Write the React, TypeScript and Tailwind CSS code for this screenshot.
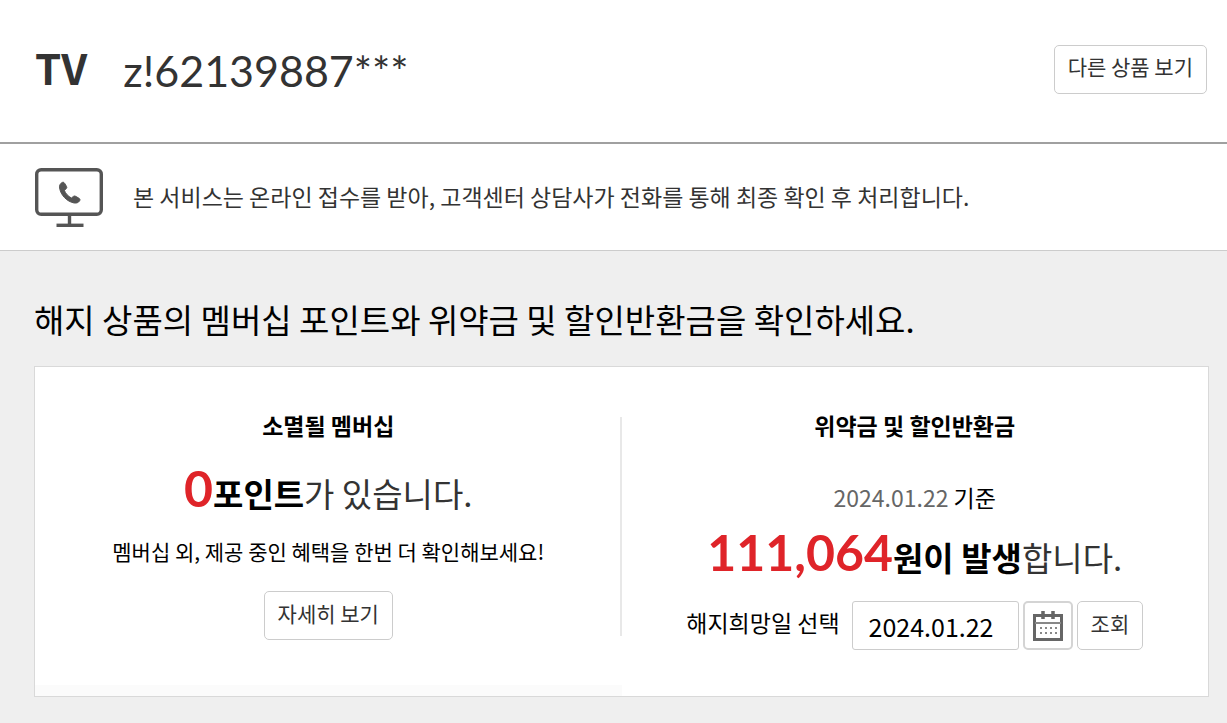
import type { ReactNode } from "react";

function MonitorIcon() {
  return (
    <svg className="h-[60px] w-[68px] shrink-0" viewBox="0 0 68 60" fill="none" aria-hidden="true">
      <rect x="1.7" y="1.7" width="64.6" height="44.6" rx="4.5" stroke="#555" strokeWidth="3.4" />
      <path d="M34.5 47v10" stroke="#555" strokeWidth="3.4" />
      <path d="M21.5 57.3h27" stroke="#555" strokeWidth="3.4" />
      <path
        d="M27.6 14.3c1-.3 1.8.4 2.4 1.6l1.6 2.7c.4.9.2 1.7-.6 2.3l-1.7 1.3c1.1 3.2 3.8 6.1 7.1 7.8l1.9-1.5c.7-.6 1.5-.7 2.3-.2l3 1.7c1.3.7 1.7 1.6 1.1 2.7-1.2 2-3.4 2.8-6 2.2-7-1.6-12.9-7.700-14.100-14.900-.4-2.600.6-4.700 3-5.700z"
        fill="#555"
        stroke="#555"
        strokeLinejoin="round"
      />
    </svg>
  );
}

function CalendarIcon() {
  const columns = [8, 13, 18, 23];
  const rows = [17, 22];

  return (
    <svg className="h-[30px] w-[30px]" viewBox="0 0 30 30" fill="none" aria-hidden="true">
      <rect x="1.5" y="4.5" width="27" height="24" stroke="#666" strokeWidth="3" />
      <path d="M2 12h26" stroke="#888" strokeWidth="2" />
      <path d="M10 0v8M20 0v8" stroke="#666" strokeWidth="3.5" />
      {rows.map((y) =>
        columns.map((x) => (
          <rect key={`${x}-${y}`} x={x - 1} y={y - 1} width="2" height="2" fill="#888" />
        ))
      )}
    </svg>
  );
}

function OutlineButton({ children }: { children: ReactNode }) {
  return (
    <button
      type="button"
      className="h-[49px] shrink-0 rounded-[5px] border border-[#ccc] bg-white px-[13px] pb-[6px] text-[21px] leading-8 text-[#333]"
    >
      {children}
    </button>
  );
}

export default function App() {
  return (
    <div className="min-h-screen bg-[#efefef] font-['Noto_Sans_CJK_KR',sans-serif] text-black">
      <header className="flex h-36 items-center justify-between border-b-2 border-[#a0a0a0] bg-white pr-5 pb-1 pl-[35px] text-[#333]">
        <h1 className="flex items-center gap-9 pt-1 leading-[52px]">
          <strong className="pb-2 text-[42px] font-bold">TV</strong>
          <span className="font-['Lato',sans-serif] text-[43px] font-normal">z!62139887***</span>
        </h1>
        <OutlineButton>다른 상품 보기</OutlineButton>
      </header>

      <section className="flex h-[107px] items-center gap-[30px] border-b border-[#ccc] bg-white pt-0.5 pl-[35px] text-[#333]">
        <MonitorIcon />
        <p className="pb-1 text-[23px] leading-8">
          본 서비스는 온라인 접수를 받아, 고객센터 상담사가 전화를 통해 최종 확인 후 처리합니다.
        </p>
      </section>

      <main className="pt-11 pr-[18px] pb-[26px] pl-[34px]">
        <h2 className="text-[33px] leading-[48px]">
          해지 상품의 멤버십 포인트와 위약금 및 할인반환금을 확인하세요.
        </h2>

        <div className="mt-[23px] flex border border-[#d9d9d9] bg-white text-center">
          <section className="flex flex-1 flex-col items-center pt-10">
            <h3 className="text-[23px] leading-9 font-bold">소멸될 멤버십</h3>
            <p className="mt-5 flex items-baseline text-[33px] leading-[60px] text-[#333]">
              <span className="font-['Lato',sans-serif] text-[50px] leading-[44px] font-bold text-[#df2429]">0</span>
              <strong className="font-bold text-black">포인트</strong>
              <span>가 있습니다.</span>
            </p>
            <p className="mt-3 mb-6 text-[21px] leading-8">
              멤버십 외, 제공 중인 혜택을 한번 더 확인해보세요!
            </p>
            <OutlineButton>자세히 보기</OutlineButton>
            <div className="mt-auto h-[11px] w-full bg-[#fbfbfb]" />
          </section>

          <div className="mt-[50px] mb-[60px] -ml-0.5 w-0.5 bg-[#e8e8e8]" />

          <section className="flex flex-1 flex-col items-center pt-10 pb-[46px]">
            <h3 className="text-[23px] leading-9 font-bold">위약금 및 할인반환금</h3>
            <p className="mt-[38px] text-[23px] leading-8">
              <span className="text-[#666]">2024.01.22</span> 기준
            </p>
            <p className="mt-[14px] flex items-baseline text-[33px] leading-[60px] text-[#333]">
              <span className="font-['Lato',sans-serif] text-[50px] leading-[44px] font-bold text-[#df2429]">111,064</span>
              <strong className="font-bold text-black">원이 발생</strong>
              <span>합니다.</span>
            </p>
            <form className="mt-[14px] flex items-center gap-1" onSubmit={(e) => e.preventDefault()}>
              <label htmlFor="cancel-date" className="mr-2 pb-2 text-[23px] leading-8">
                해지희망일 선택
              </label>
              <input
                id="cancel-date"
                type="text"
                defaultValue="2024.01.22"
                className="h-[49px] w-[167px] rounded-[3px] border border-[#ccc] bg-white px-4 text-[25px]"
              />
              <button
                type="button"
                aria-label="날짜 선택"
                className="flex h-[49px] w-[50px] items-center justify-center rounded-[5px] border-2 border-[#d4d4d4] bg-white"
              >
                <CalendarIcon />
              </button>
              <OutlineButton>조회</OutlineButton>
            </form>
          </section>
        </div>
      </main>
    </div>
  );
}
